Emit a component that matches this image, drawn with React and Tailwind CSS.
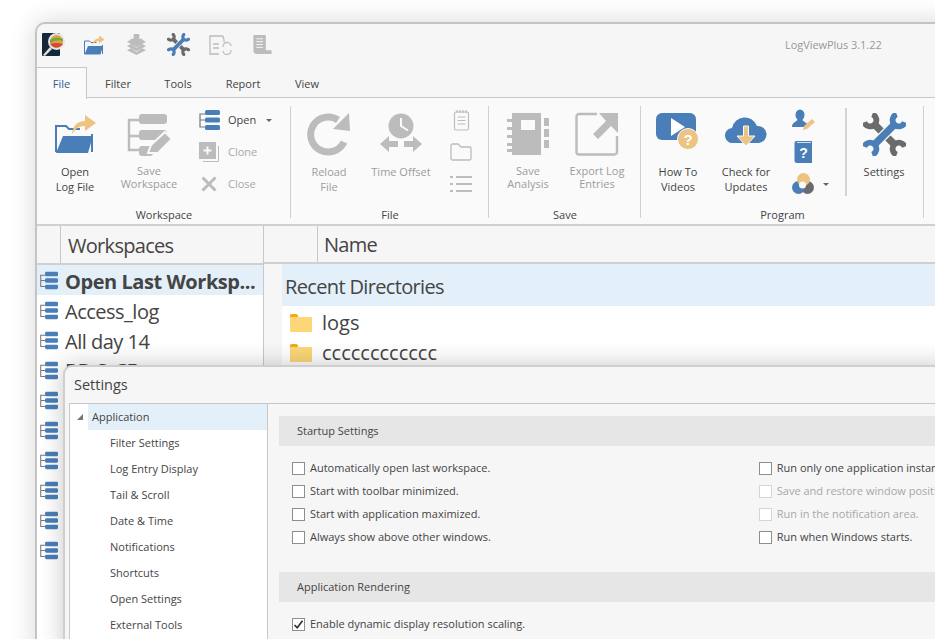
import React from 'react';

const BLUE = '#4a7eb8';
const GREY = '#bcbcbc';
const GOLD = '#ecc380';
const DARK = '#6b6b6b';

function Wrench({ size = 44 }) {
  return (
    <svg width={size} height={size} viewBox="0 0 48 48" fill="none">
      <g stroke={DARK}>
        <path d="M1.400 10.400 A7 7 0 1 0 10.400 1.400" strokeWidth="6.500" />
        <path d="M46.600 37.600 A7 7 0 1 0 37.600 46.600" strokeWidth="6.500" />
        <path d="M13 13 L35 35" strokeWidth="8" />
      </g>
      <path d="M35 13 L13 35" stroke="#fafafa" strokeWidth="11" />
      <g stroke={BLUE}>
        <path d="M46.600 10.400 A7 7 0 1 1 37.600 1.400" strokeWidth="6.500" />
        <path d="M1.400 37.600 A7 7 0 1 1 10.400 46.600" strokeWidth="6.500" />
        <path d="M35 13 L13 35" strokeWidth="8" />
      </g>
    </svg>
  );
}

function WorkspaceIcon({ size = 19, bar = BLUE, line = '#777' }) {
  return (
    <svg width={size} height={size} viewBox="0 0 22 22" fill="none">
      <path d="M7 5 H2 V18 H7 M2 11 H7" stroke={line} strokeWidth="1.2" />
      <rect x="7" y="1" width="15" height="5" rx="1.5" fill={bar} />
      <rect x="7" y="8.5" width="15" height="5" rx="1.5" fill={bar} />
      <rect x="7" y="16" width="15" height="5" rx="1.5" fill={bar} />
    </svg>
  );
}

function OpenFolder({ size = 44 }) {
  return (
    <svg width={size} height={size} viewBox="0 0 44 44" fill="none">
      <path d="M3 40 V14 H13 L16 17 H27 M39 22 V40" stroke={BLUE} strokeWidth="2" />
      <path d="M10 24 H40 L35 41 H3 Z" fill={BLUE} />
      <path d="M19 22 C20 12 26 9 32 9 V3 L43 11 L32 19 V14 C27 14 23 16 19 22 Z" fill={GOLD} />
    </svg>
  );
}

function SaveWorkspaceIcon() {
  return (
    <svg width={44} height={44} viewBox="0 0 44 44" fill="none">
      <path d="M12 8 H2 V38 H12 M2 24 H12" stroke={GREY} strokeWidth="2.4" />
      <rect x="12" y="2" width="28" height="10" rx="3" fill={GREY} />
      <rect x="12" y="18" width="28" height="10" rx="3" fill={GREY} />
      <rect x="12" y="34" width="14" height="10" rx="3" fill={GREY} />
      <path d="M21 41 L24 33 L38 20 L45 27 L31 41 Z" fill={GREY} stroke="#fafafa" strokeWidth="2" />
    </svg>
  );
}

function CloneIcon() {
  return (
    <svg width={22} height={22} viewBox="0 0 22 22" fill="none">
      <rect x="1" y="1" width="17" height="17" fill={GREY} />
      <path d="M20.5 5 V20.5 H5" stroke={GREY} strokeWidth="1" />
      <path d="M9.5 5.5 V13.5 M5.5 9.5 H13.5" stroke="#fafafa" strokeWidth="2" />
    </svg>
  );
}

function CloseIcon() {
  return (
    <svg width={16} height={16} viewBox="0 0 16 16" fill="none">
      <path d="M1.5 1.5 L14.5 14.5 M14.5 1.5 L1.5 14.5" stroke={GREY} strokeWidth="3" />
    </svg>
  );
}

function ReloadIcon() {
  return (
    <svg width={44} height={44} viewBox="0 0 44 44" fill="none">
      <path d="M37 30 A17.5 17.5 0 1 1 31 8" stroke={GREY} strokeWidth="7" />
      <path d="M42 1 L43 19 L26 17 Z" fill={GREY} />
    </svg>
  );
}

function TimeOffsetIcon() {
  return (
    <svg width={44} height={44} viewBox="0 0 44 44" fill="none">
      <circle cx="22" cy="14" r="12.5" fill={GREY} />
      <path d="M22 6 V14 L29 18.5" stroke="#fafafa" strokeWidth="2" />
      <path d="M1 32 L10 24 V29 H19 V35 H10 V40 Z M43 32 L34 24 V29 H25 V35 H34 V40 Z" fill={GREY} />
    </svg>
  );
}

function NotepadIcon() {
  return (
    <svg width={17} height={22} viewBox="0 0 17 22" fill="none" stroke={GREY} strokeWidth="1.2">
      <rect x="1.5" y="3" width="14" height="18" rx="1.5" />
      <path d="M4 1 V4 M7 1 V4 M10 1 V4 M13 1 V4 M4.5 8 H12.5 M4.5 11.5 H12.5 M4.5 15 H12.5" />
    </svg>
  );
}

function FolderLine() {
  return (
    <svg width={22} height={18} viewBox="0 0 22 18" fill="none" stroke={GREY} strokeWidth="1.3">
      <path d="M1 2.5 A1.5 1.5 0 0 1 2.5 1 H8 L11 4 H19.5 A1.5 1.5 0 0 1 21 5.5 V15.5 A1.5 1.5 0 0 1 19.5 17 H2.5 A1.5 1.5 0 0 1 1 15.5 Z" />
    </svg>
  );
}

function ListIcon() {
  return (
    <svg width={22} height={18} viewBox="0 0 22 18" fill={GREY}>
      <rect x="0" y="1" width="3" height="2" />
      <rect x="6" y="1" width="16" height="2" />
      <rect x="0" y="8" width="3" height="2" />
      <rect x="6" y="8" width="16" height="2" />
      <rect x="0" y="15" width="3" height="2" />
      <rect x="6" y="15" width="16" height="2" />
    </svg>
  );
}

function AnalysisIcon() {
  return (
    <svg width={44} height={44} viewBox="0 0 44 44">
      <rect x="6" y="1" width="29" height="42" fill={GREY} />
      <path d="M1 7 H8 V10 H1 Z M1 15 H8 V18 H1 Z M1 23 H8 V26 H1 Z M1 31 H8 V34 H1 Z M1 37 H8 V40 H1 Z" fill={GREY} />
      <rect x="15" y="8" width="14" height="10" fill="#fafafa" />
      <rect x="38" y="6" width="5" height="8" fill={GREY} />
      <rect x="38" y="17" width="5" height="8" fill={GREY} />
      <rect x="38" y="28" width="5" height="8" fill={GREY} />
    </svg>
  );
}

function ExportIcon() {
  return (
    <svg width={44} height={44} viewBox="0 0 44 44" fill="none">
      <path d="M22 2 H4 A2.5 2.5 0 0 0 1.500 4.500 V40 A2.500 2.500 0 0 0 4 42.500 H39.500 A2.500 2.500 0 0 0 42 40 V24" stroke={GREY} strokeWidth="2.400" />
      <path d="M43 1 V21 L36 14 L23 27 L18 22 L31 9 L24 1 Z" fill={GREY} />
    </svg>
  );
}

function VideoIcon() {
  return (
    <svg width={44} height={44} viewBox="0 0 44 44">
      <rect x="0" y="1" width="40" height="27" rx="6" fill={BLUE} />
      <path d="M15 6 L29 15 L15 24 Z" fill="#fff" />
      <circle cx="32" cy="27" r="10.500" fill={GOLD} stroke="#fafafa" strokeWidth="1" />
      <text x="32" y="32.500" fontSize="15" fontWeight="700" textAnchor="middle" fill="#fff" fontFamily="Liberation Sans">?</text>
    </svg>
  );
}

function CloudIcon() {
  return (
    <svg width={44} height={44} viewBox="0 0 44 44">
      <path d="M9 31 A7.500 7.500 0 0 1 8 16 A13 13 0 0 1 33 14 A8.500 8.500 0 0 1 35 31 Z" fill={BLUE} />
      <path d="M19.500 14 H24.500 V24 H31 L22 34 L13 24 H19.500 Z" fill={GOLD} stroke="#fafafa" strokeWidth="1" />
    </svg>
  );
}

function UserPen() {
  return (
    <svg width={24} height={22} viewBox="0 0 24 22">
      <ellipse cx="8" cy="6" rx="4.500" ry="5.500" fill={BLUE} />
      <path d="M0 18 C0 13 5 13 6 10 H10 C11 13 14 13 15 15 L12 18 Z" fill={BLUE} />
      <path d="M11 21 L12 17 L20 10 L23 13 L15 20 Z" fill={GOLD} />
    </svg>
  );
}

function HelpBook() {
  return (
    <svg width={18} height={22} viewBox="0 0 18 22">
      <path d="M2 0 H18 V22 H3 A2.500 2.500 0 0 1 0.500 19.500 V2 A2 2 0 0 1 2 0 Z" fill={BLUE} />
      <path d="M3 1.500 H17" stroke="#cfe0f0" strokeWidth="1" />
      <text x="9.500" y="16.500" fontSize="14" fontWeight="700" textAnchor="middle" fill="#fff" fontFamily="Liberation Sans">?</text>
    </svg>
  );
}

function ThemeIcon() {
  return (
    <svg width={22} height={22} viewBox="0 0 22 22">
      <circle cx="15.500" cy="14.500" r="6.500" fill={DARK} />
      <circle cx="6.500" cy="14.500" r="6.500" fill={BLUE} />
      <circle cx="11.500" cy="6.500" r="6.500" fill={GOLD} />
      <circle cx="10.500" cy="12" r="3.500" fill="#fafafa" />
    </svg>
  );
}

function SmallFolder() {
  return (
    <svg width={22} height={18} viewBox="0 0 22 18">
      <path d="M0 1.500 A1.500 1.500 0 0 1 1.500 0 H6.500 L8.500 2 H8 V4 H0 Z" fill="#f0aa1c" />
      <rect x="0" y="3" width="22" height="15" rx="1" fill="#fbd777" />
    </svg>
  );
}

function LargeButton({ w, icon, lines, muted, tight }) {
  return (
    <div className="flex flex-col items-center shrink-0" style={{ width: w }}>
      <div className="h-[44px] flex items-center justify-center mt-[14px]">{icon}</div>
      <div className={`text-center mt-[8px] ${tight ? 'leading-[13px]' : 'leading-[15px]'} ${muted ? 'text-[#9c9c9c]' : 'text-[#444]'}`}>
        {lines.map((l) => (
          <div key={l} className="whitespace-nowrap">{l}</div>
        ))}
      </div>
    </div>
  );
}

function SmallRow({ icon, label, muted, caret }) {
  return (
    <div className="h-[32px] flex items-center">
      <div className="w-[22px] flex justify-center">{icon}</div>
      <span className={`ml-[8px] ${muted ? 'text-[#a8a8a8]' : 'text-[#444]'}`}>{label}</span>
      {caret && <span className="ml-[10px] w-0 h-0 border-x-[3px] border-x-transparent border-t-[3px] border-t-[#666]" />}
    </div>
  );
}

function Group({ w, label, children }) {
  return (
    <div className="relative shrink-0 h-full" style={{ width: w }}>
      <div className="flex h-[112px]">{children}</div>
      <div className="absolute left-0 right-0 top-[110px] text-center text-[#444] leading-[14px]">{label}</div>
      <div className="absolute right-0 top-[8px] h-[112px] w-px bg-[#cfcfcf]" />
    </div>
  );
}

function Ribbon() {
  return (
    <div className="h-[128px] bg-[#fafafa] border-b-2 border-[#d0d0d0] flex text-[11px]">
      <Group w={254} label="Workspace">
        <LargeButton w={76} icon={<OpenFolder />} lines={['Open', 'Log File']} />
        <LargeButton w={72} icon={<SaveWorkspaceIcon />} lines={['Save', 'Workspace']} muted tight />
        <div className="ml-[13px] mt-[6px]">
          <SmallRow icon={<WorkspaceIcon size={22} />} label="Open" caret />
          <SmallRow icon={<CloneIcon />} label="Clone" muted />
          <SmallRow icon={<CloseIcon />} label="Close" muted />
        </div>
      </Group>
      <Group w={198} label="File">
        <LargeButton w={76} icon={<ReloadIcon />} lines={['Reload', 'File']} muted />
        <LargeButton w={68} icon={<TimeOffsetIcon />} lines={['Time Offset']} muted />
        <div className="w-[36px] ml-[8px] mt-[6px] flex flex-col items-center">
          <div className="h-[32px] flex items-center"><NotepadIcon /></div>
          <div className="h-[32px] flex items-center"><FolderLine /></div>
          <div className="h-[32px] flex items-center"><ListIcon /></div>
        </div>
      </Group>
      <Group w={152} label="Save">
        <LargeButton w={78} icon={<AnalysisIcon />} lines={['Save', 'Analysis']} muted tight />
        <LargeButton w={60} icon={<ExportIcon />} lines={['Export Log', 'Entries']} muted tight />
      </Group>
      <Group w={283} label="Program">
        <LargeButton w={74} icon={<VideoIcon />} lines={['How To', 'Videos']} />
        <LargeButton w={62} icon={<CloudIcon />} lines={['Check for', 'Updates']} />
        <div className="ml-[13px] w-[44px] mt-[6px] flex flex-col items-start pl-[2px]">
          <div className="h-[32px] flex items-center"><UserPen /></div>
          <div className="h-[32px] flex items-center pl-[2px]"><HelpBook /></div>
          <div className="h-[32px] flex items-center">
            <ThemeIcon />
            <span className="ml-[9px] w-0 h-0 border-x-[3px] border-x-transparent border-t-[3px] border-t-[#666]" />
          </div>
        </div>
        <div className="ml-[11px] mt-[10px] w-[2px] h-[88px] bg-[#d4d4d4]" />
        <LargeButton w={74} icon={<Wrench size={43} />} lines={['Settings']} />
      </Group>
    </div>
  );
}

function TitleBar() {
  return (
    <div className="h-[43px] flex items-center relative">
      <div className="pl-[5px] pb-[2px] flex items-center">
        <svg width={23} height={23} viewBox="0 0 23 23">
          <rect x="0" y="0" width="18" height="23" rx="1" fill="#14283a" />
          <path d="M1 22 L8 14 L10 16 L3 23 Z" fill="#dfdfdf" />
          <circle cx="14.500" cy="8.500" r="8.500" fill="#e6e6e6" />
          <circle cx="14.500" cy="8.500" r="6.500" fill="#e2a13a" />
          <path d="M8 7 Q14 3 21 6 V8 Q14 6 8 10 Z" fill="#6fa84c" />
          <path d="M8 11 Q14 9 21 11 L19 13 Q14 16 10 13 Z" fill="#d1493a" />
        </svg>
        <div className="ml-[18px] flex items-center"><OpenFolder size={22} /></div>
        <svg width={19} height={21} viewBox="0 0 20 22" className="ml-[22px]">
          <path d="M7 0 H13 V5 H17 L10 11 L3 5 H7 Z" fill={GREY} />
          <path d="M0 8 L5 5.500 L10 10 L15 5.500 L20 8 L10 14 Z M0 12.500 L4 10.500 L10 14.500 L16 10.500 L20 12.500 L10 18 Z M0 17 L4 15 L10 19 L16 15 L20 17 L10 22 Z" fill={GREY} />
        </svg>
        <div className="ml-[21px] flex items-center"><Wrench size={23} /></div>
        <svg width={24} height={20} viewBox="0 0 24 20" fill="none" stroke={GREY} strokeWidth="1.300" className="ml-[19px]">
          <path d="M14 1 H1 V19 H10 M14 1 L15 5 V7" />
          <path d="M4 9 H10 M4 13 H10 M14 12 A4 4 0 0 1 22 11 M22 15 A4 4 0 0 1 14 16" />
        </svg>
        <svg width={20} height={21} viewBox="0 0 20 22" className="ml-[19px]">
          <path d="M1 1 H14 V17 H20 V21 H5 A4 4 0 0 1 1 17 Z" fill={GREY} />
          <path d="M4 5 H11 M4 8 H11 M4 11 H11 M4 14 H11" stroke="#f6f6f6" strokeWidth="1" />
        </svg>
      </div>
      <span className="absolute left-[748px] top-[13px] text-[11px] tracking-[-0.05px] text-[#999]">LogViewPlus 3.1.22</span>
    </div>
  );
}

function Tabs() {
  const tabs = [
    { t: 'Filter', w: 62 },
    { t: 'Tools', w: 58 },
    { t: 'Report', w: 72 },
    { t: 'View', w: 56 },
  ];
  return (
    <div className="h-[31px] flex text-[11px] relative">
      <div className="w-[50px] h-[32px] pt-[1px] bg-[#fafafa] border-t border-r border-[#c8c8c8] flex items-center justify-center text-[#2f5c94] relative z-10">File</div>
      {tabs.map(({ t, w }) => (
        <div key={t} className="flex items-center justify-center text-[#444] pt-[4px]" style={{ width: w }}>{t}</div>
      ))}
      <div className="absolute left-0 right-0 bottom-0 h-px bg-[#c8c8c8]" />
    </div>
  );
}

const workspaces = ['Open Last Worksp...', 'Access_log', 'All day 14', 'BB.Q.CF', '', '', '', '', '', ''];

function WorkspaceList() {
  return (
    <div className="w-[227px] shrink-0 border-r border-[#c8c8c8] bg-white h-full">
      <div className="h-[39px] flex bg-[#f6f6f6] border-b-2 border-[#d0d0d0]">
        <div className="w-[24px] border-r border-[#c8c8c8]" />
        <div className="pl-[7px] text-[20px] leading-[39px] tracking-[-0.7px] text-[#444]">Workspaces</div>
      </div>
      {workspaces.map((w, i) => (
        <div key={i} className={`h-[30px] flex items-center pl-[2px] ${i === 0 ? 'bg-[#e3f0fa]' : ''}`}>
          <WorkspaceIcon />
          <span className={`ml-[7px] text-[20px] text-[#444] whitespace-nowrap ${i === 3 ? 'pt-[1px]' : 'pt-[4px]'} ${i === 0 ? 'font-bold tracking-[-0.45px]' : 'tracking-[-0.5px]'}`}>{w}</span>
        </div>
      ))}
    </div>
  );
}

function RecentPane() {
  return (
    <div className="flex-1 min-w-0 h-full bg-[#f6f6f6]">
      <div className="h-[38px] flex border-b-2 border-[#d0d0d0]">
        <div className="w-[54px] border-r border-[#c8c8c8]" />
        <div className="pl-[6px] text-[20px] leading-[37px] tracking-[-0.7px] text-[#444]">Name</div>
      </div>
      <div className="ml-[18px] bg-white h-full">
        <div className="h-[42px] bg-[#e3f0fa] flex items-center pl-[3px] pt-[4px] text-[20px] tracking-[-0.65px] text-[#444]">Recent Directories</div>
        <div className="pt-[2px]">
          {['logs', 'cccccccccccc'].map((d) => (
            <div key={d} className="h-[30px] flex items-center pl-[8px] text-[20px] text-[#444]">
              <SmallFolder />
              <span className="ml-[10px]">{d}</span>
            </div>
          ))}
        </div>
      </div>
    </div>
  );
}

const treeItems = ['Filter Settings', 'Log Entry Display', 'Tail & Scroll', 'Date & Time', 'Notifications', 'Shortcuts', 'Open Settings', 'External Tools'];

function Check({ label, checked, disabled }) {
  return (
    <div className="h-[23px] flex items-center">
      <span className={`w-[13px] h-[13px] border bg-white flex items-center justify-center shrink-0 ${disabled ? 'border-[#d5d5d5]' : 'border-[#8e8e8e]'}`}>
        {checked && (
          <svg width={11} height={11} viewBox="0 0 11 11" fill="none">
            <path d="M1.500 6 L4.200 8.800 L9.500 1.800" stroke="#333" strokeWidth="1.700" />
          </svg>
        )}
      </span>
      <span className={`ml-[5px] whitespace-nowrap ${disabled ? 'text-[#a8a8a8]' : 'text-[#444]'}`}>{label}</span>
    </div>
  );
}

function SectionBar({ children }) {
  return <div className="h-[30px] bg-[#e6e6e6] flex items-center pl-[18px] text-[#444]">{children}</div>;
}

function SettingsDialog() {
  return (
    <div className="absolute left-[63px] top-[365px] w-[890px] h-[290px] bg-[#f6f6f6] border-t-2 border-l-2 border-[#cfcfcf] rounded-tl-[9px] shadow-[0_0_24px_rgba(0,0,0,0.22)] text-[11px]">
      <div className="h-[36px] pl-[9px] flex items-center text-[14.5px] text-[#444]">Settings</div>
      <div className="flex h-full">
        <div className="ml-[4px] w-[199px] shrink-0 h-full bg-white border-t border-l border-r border-[#c8c8c8]">
          <div className="h-[26px] flex items-center">
            <svg width={6} height={6} viewBox="0 0 6 6" className="ml-[7px]">
              <path d="M6 0 V6 H0 Z" fill="#777" />
            </svg>
            <div className="ml-[5px] flex-1 h-full bg-[#e3f0fa] flex items-center pl-[4px] text-[#444]">Application</div>
          </div>
          {treeItems.map((t) => (
            <div key={t} className="h-[26px] flex items-center pl-[40px] text-[#444]">{t}</div>
          ))}
        </div>
        <div className="flex-1 min-w-0 border-t border-[#c8c8c8] pl-[11px] pt-[12px]">
          <SectionBar>Startup Settings</SectionBar>
          <div className="flex pt-[11px] pl-[13px] h-[126px]">
            <div className="w-[467px]">
              <Check label="Automatically open last workspace." />
              <Check label="Start with toolbar minimized." />
              <Check label="Start with application maximized." />
              <Check label="Always show above other windows." />
            </div>
            <div>
              <Check label="Run only one application instance." />
              <Check label="Save and restore window position." disabled />
              <Check label="Run in the notification area." disabled />
              <Check label="Run when Windows starts." />
            </div>
          </div>
          <SectionBar>Application Rendering</SectionBar>
          <div className="pt-[11px] pl-[13px]">
            <Check label="Enable dynamic display resolution scaling." checked />
          </div>
        </div>
      </div>
    </div>
  );
}

export default function App() {
  return (
    <div className="relative w-[935px] h-[639px] overflow-hidden bg-white" style={{ fontFamily: '"Open Sans", "Noto Sans", sans-serif' }}>
      <div className="absolute left-[35px] top-[22px] w-[920px] h-[640px] bg-[#f6f6f6] border-t-2 border-l-2 border-[#c4c4c4] rounded-tl-[10px] shadow-[0_0_26px_rgba(0,0,0,0.16)]">
        <TitleBar />
        <Tabs />
        <Ribbon />
        <div className="flex h-[420px]">
          <WorkspaceList />
          <RecentPane />
        </div>
      </div>
      <SettingsDialog />
    </div>
  );
}
